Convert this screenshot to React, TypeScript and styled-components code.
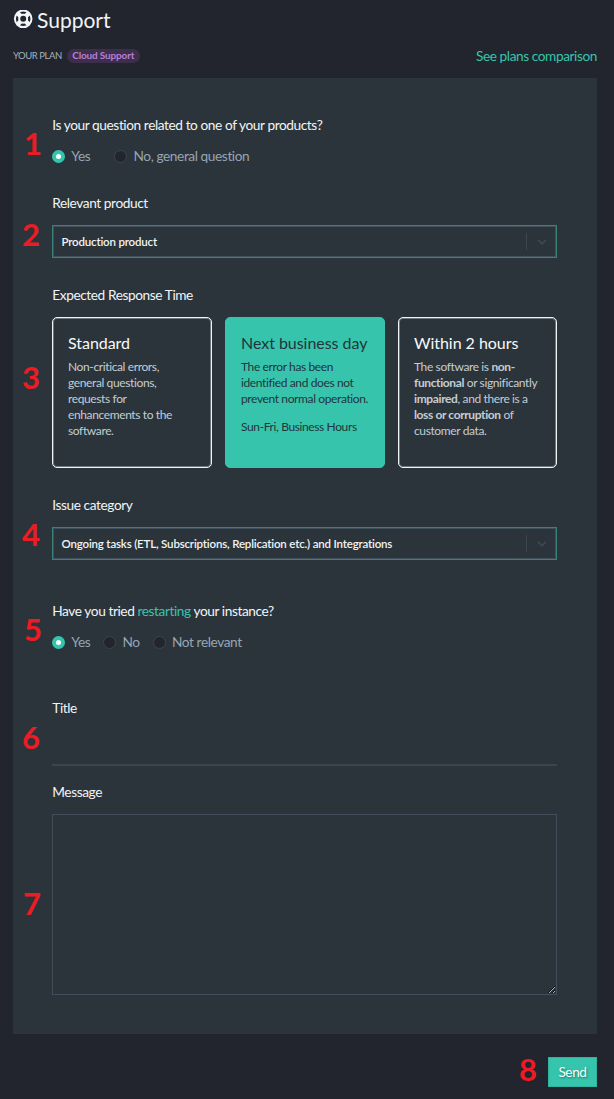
import React from "react";
import styled, { createGlobalStyle } from "styled-components";

const Global = createGlobalStyle`
  * { box-sizing: border-box; }
  body { margin: 0; background: #22252d; font-family: Lato, sans-serif; }
`;

const Page = styled.main`
  width: 614px;
  height: 1099px;
  padding: 0 17px 0 13px;
  background: #22252d;
  color: #f0f4f6;
  overflow: hidden;
`;

const Heading = styled.h1`
  display: flex;
  align-items: center;
  gap: 4px;
  height: 40px;
  margin: 0;
  font-size: 21px;
  font-weight: 400;
  line-height: 40px;
`;

const PlanBar = styled.div`
  display: flex;
  align-items: center;
  height: 38px;
  padding-bottom: 7px;
`;

const PlanLabel = styled.span`
  margin-right: 5px;
  font-size: 9.5px;
  letter-spacing: -0.45px;
  color: #a4b3bd;
`;

const Badge = styled.span`
  height: 14px;
  padding: 0 6px 0 5.5px;
  border-radius: 7px;
  background: #3c2f4b;
  color: #b77fd6;
  font-size: 10px;
  font-weight: 700;
  letter-spacing: -0.17px;
  line-height: 13px;
`;

const Link = styled.a<{ $end?: boolean }>`
  margin-left: ${(p) => (p.$end ? "auto" : "0")};
  font-size: 13.7px;
  letter-spacing: -0.43px;
  color: #37c4ac;
`;

const Panel = styled.form`
  height: 956px;
  padding: 37px 40px 0 39px;
  background: #2c343b;
`;

const Field = styled.section<{ $height: number }>`
  position: relative;
  height: ${(p) => p.$height}px;
`;

const Marker = styled.span<{ $x: number; $y: number }>`
  position: absolute;
  left: ${(p) => p.$x}px;
  top: ${(p) => p.$y}px;
  color: #ed1c24;
  font-size: 31px;
  font-weight: 700;
  line-height: 32px;
`;

const Label = styled.div<{ $gap?: number }>`
  height: 20px;
  margin-bottom: ${(p) => p.$gap ?? 12}px;
  padding-left: 0.3px;
  font-size: 13.7px;
  letter-spacing: -0.42px;
  line-height: 20px;
  white-space: nowrap;
`;

const Radios = styled.div<{ $gap: number }>`
  display: flex;
  gap: ${(p) => p.$gap}px;
`;

const RadioLabel = styled.label`
  display: flex;
  align-items: center;
  gap: 6.3px;
  height: 20px;
  color: #95a5b4;
  font-size: 13.7px;
  letter-spacing: -0.42px;
  line-height: 20px;
  white-space: nowrap;
`;

const RadioText = styled.span`
  height: 20px;
`;

const Dot = styled.span<{ $on?: boolean }>`
  width: 13px;
  height: 13px;
  border-radius: 50%;
  border: ${(p) => (p.$on ? "4px solid #37c4ac" : "1px solid #3c4450")};
  background: ${(p) => (p.$on ? "#fff" : "#22252d")};
`;

const Select = styled.div`
  display: flex;
  align-items: center;
  height: 33px;
  padding-left: 8.5px;
  border: 1px solid #3a8179;
  box-shadow: inset 0 0 0 1px #40505b;
  font-size: 11.5px;
  font-weight: 600;
  letter-spacing: -0.18px;
  white-space: nowrap;
`;

const Arrow = styled.span`
  display: flex;
  align-items: center;
  justify-content: center;
  width: 30px;
  height: 17px;
  margin-left: auto;
  border-left: 1px solid #3c4653;
`;

const Cards = styled.div`
  display: grid;
  grid-template-columns: 160px 160px 159px;
  gap: 13px;
`;

const Card = styled.article<{ $active?: boolean }>`
  height: 151px;
  padding: 15px 0 0 15px;
  border: 1px solid ${(p) => (p.$active ? "#37c4ac" : "#eef3f5")};
  box-shadow: ${(p) => (p.$active ? "none" : "inset 0 0 0 1px rgba(238, 243, 245, 0.35)")};
  border-radius: 5px;
  background: ${(p) => (p.$active ? "#37c4ac" : "transparent")};
  color: ${(p) => (p.$active ? "#22343c" : "#c3cdd4")};
  font-size: 12px;
  letter-spacing: -0.38px;
  line-height: 16px;
  white-space: nowrap;
  h2 {
    margin: 0 0 7px;
    color: ${(p) => (p.$active ? "#22343c" : "#f7fafb")};
    font-size: 16px;
    font-weight: 400;
    letter-spacing: -0.04px;
    line-height: 19px;
  }
  p { margin: 0 0 12px; }
`;

const TitleInput = styled.input`
  display: block;
  width: 100%;
  height: 36px;
  padding: 0;
  border: 0;
  border-bottom: 2px solid #3b454f;
  background: transparent;
  color: inherit;
  outline: none;
`;

const MessageInput = styled.textarea`
  display: block;
  width: 100%;
  height: 181px;
  border: 1px solid #414d5a;
  border-radius: 0;
  background: transparent;
  color: inherit;
  outline: none;
  resize: vertical;
`;

const Footer = styled.footer`
  position: relative;
  display: flex;
  justify-content: flex-end;
  padding-top: 23px;
`;

const Send = styled.button`
  width: 49px;
  height: 30px;
  padding: 0 0 2px;
  border: 1px solid #30b49e;
  background: #37c4ac;
  color: #f5fffd;
  font-family: inherit;
  font-size: 13.7px;
  letter-spacing: -0.45px;
  text-shadow: 1px 1px 2px #17766a;
`;

const Lifebuoy = () => (
  <svg width="20" height="20" viewBox="0 0 20 20" fill="none" stroke="#f4f7f8">
    <circle cx="10.2" cy="8.8" r="8.3" strokeWidth="2" />
    <circle cx="10.2" cy="8.8" r="4" strokeWidth="2" />
    <path d="M4.6 3.2 7.4 6M15.8 3.2 13 6M4.6 14.4 7.4 11.6M15.8 14.4 13 11.6" strokeWidth="4.6" />
  </svg>
);

const Dropdown = ({ value }: { value: string }) => (
  <Select>
    {value}
    <Arrow>
      <svg width="10" height="6" viewBox="0 0 10 6" fill="none" stroke="#3d4855" strokeWidth="1.7">
        <path d="m1 .8 4 4 4-4" />
      </svg>
    </Arrow>
  </Select>
);

const Radio = ({ text, on }: { text: string; on?: boolean }) => (
  <RadioLabel><Dot $on={on} /><RadioText>{text}</RadioText></RadioLabel>
);

export default function App() {
  return (
    <>
      <Global />
      <Page>
        <Heading><Lifebuoy />Support</Heading>
        <PlanBar>
          <PlanLabel>YOUR PLAN</PlanLabel>
          <Badge>Cloud Support</Badge>
          <Link $end>See plans comparison</Link>
        </PlanBar>
        <Panel>
          <Field $height={78}>
            <Marker $x={-28} $y={12}>1</Marker>
            <Label $gap={11}>Is your question related to one of your products?</Label>
            <Radios $gap={24}><Radio text="Yes" on /><Radio text="No, general question" /></Radios>
          </Field>
          <Field $height={92}>
            <Marker $x={-30} $y={25}>2</Marker>
            <Label>Relevant product</Label>
            <Dropdown value="Production product" />
          </Field>
          <Field $height={210}>
            <Marker $x={-30} $y={76}>3</Marker>
            <Label>Expected Response Time</Label>
            <Cards>
              <Card>
                <h2>Standard</h2>
                <p>Non-critical errors,<br />general questions,<br />requests for<br />enhancements to the<br />software.</p>
              </Card>
              <Card $active>
                <h2>Next business day</h2>
                <p>The error has been<br />identified and does not<br />prevent normal operation.</p>
                <p>Sun-Fri, Business Hours</p>
              </Card>
              <Card>
                <h2>Within 2 hours</h2>
                <p>The software is <b>non-<br />functional</b> or significantly<br /><b>impaired</b>, and there is a<br /><b>loss or corruption</b> of<br />customer data.</p>
              </Card>
            </Cards>
          </Field>
          <Field $height={106}>
            <Marker $x={-30} $y={23}>4</Marker>
            <Label>Issue category</Label>
            <Dropdown value="Ongoing tasks (ETL, Subscriptions, Replication etc.) and Integrations" />
          </Field>
          <Field $height={97}>
            <Marker $x={-28} $y={12}>5</Marker>
            <Label $gap={11}>Have you tried <Link>restarting</Link> your instance?</Label>
            <Radios $gap={13}><Radio text="Yes" on /><Radio text="No" /><Radio text="Not relevant" /></Radios>
          </Field>
          <Field $height={84}>
            <Marker $x={-30} $y={23}>6</Marker>
            <Label>Title</Label>
            <TitleInput aria-label="Title" />
          </Field>
          <Field $height={213}>
            <Marker $x={-29} $y={105}>7</Marker>
            <Label>Message</Label>
            <MessageInput aria-label="Message" />
          </Field>
        </Panel>
        <Footer>
          <Marker $x={506} $y={19}>8</Marker>
          <Send type="button">Send</Send>
        </Footer>
      </Page>
    </>
  );
}
